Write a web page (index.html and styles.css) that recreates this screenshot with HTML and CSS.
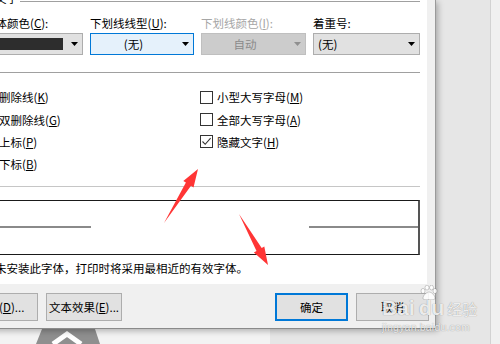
FILE: index.html
```html
<!DOCTYPE html>
<html lang="zh-CN">
<head>
<meta charset="utf-8">
<title>字体</title>
<link rel="stylesheet" href="styles.css">
</head>
<body>
<div class="stage">
  <div class="dialog">
    <div class="panel">
      <div class="group-head"><span class="group-title">所有文字</span><span class="group-line"></span></div>
      <div class="font-grid">
        <span class="fld-label">字体颜色(<u>C</u>):</span>
        <span class="fld-label">下划线线型(<u>U</u>):</span>
        <span class="fld-label is-disabled">下划线颜色(<u>I</u>):</span>
        <span class="fld-label">着重号:</span>
        <div class="combo"><span class="swatch"></span><svg class="arrow" width="7" height="4" viewBox="0 0 7 4"><path d="M0 0h7L3.5 4z"/></svg></div>
        <div class="combo combo-hover"><span class="combo-text centered">(无)</span><svg class="arrow" width="7" height="4" viewBox="0 0 7 4"><path d="M0 0h7L3.5 4z"/></svg></div>
        <div class="combo combo-disabled"><span class="combo-text centered">自动</span><svg class="arrow" width="7" height="4" viewBox="0 0 7 4"><path d="M0 0h7L3.5 4z"/></svg></div>
        <div class="combo"><span class="combo-text">(无)</span><svg class="arrow" width="7" height="4" viewBox="0 0 7 4"><path d="M0 0h7L3.5 4z"/></svg></div>
      </div>
      <div class="sep sep-effects"></div>
      <div class="effects">
        <div class="effects-col">
          <div class="check"><span class="box"></span><span>删除线(<u>K</u>)</span></div>
          <div class="check"><span class="box"></span><span>双删除线(<u>G</u>)</span></div>
          <div class="check"><span class="box"></span><span>上标(<u>P</u>)</span></div>
          <div class="check"><span class="box"></span><span>下标(<u>B</u>)</span></div>
        </div>
        <div class="effects-col">
          <div class="check"><span class="box"></span><span>小型大写字母(<u>M</u>)</span></div>
          <div class="check"><span class="box"></span><span>全部大写字母(<u>A</u>)</span></div>
          <div class="check"><span class="box"><svg width="11" height="11" viewBox="0 0 11 11"><path d="M1.5 5.5L4.2 8.3L9.6 2.2" fill="none" stroke="#333" stroke-width="1.1"/></svg></span><span>隐藏文字(<u>H</u>)</span></div>
        </div>
      </div>
      <div class="sep sep-preview"></div>
      <div class="preview"><span class="pv-line pv-left"></span><span class="pv-line pv-right"></span></div>
      <p class="note">未安装此字体，打印时将采用最相近的有效字体。</p>
    </div>
    <div class="buttons">
      <button class="btn btn-wide">设为默认值(<u>D</u>)...</button>
      <button class="btn btn-effects">文本效果(<u>E</u>)...</button>
      <span class="spacer"></span>
      <button class="btn btn-default">确定</button>
      <button class="btn">取消</button>
    </div>
  </div>
  <div class="backdrop-right"><span class="edge"></span></div>
  <div class="backdrop-bottom">
    <div class="bb-light">
      <svg width="270" height="15" viewBox="0 0 270 15"><polygon points="42,0 95,0 100,15 36,15" fill="#8f8f8f"/><polyline points="53,15 67,5 81,15" fill="none" stroke="#fff" stroke-width="5"/></svg>
    </div>
    <div class="bb-gray"></div>
  </div>
  <svg class="arrows" width="500" height="344" viewBox="0 0 500 344">
    <polygon points="164,223 185.9,182.6 183.3,181 198,169 193.5,187.4 191,185.8" fill="#ff3535"/>
    <polygon points="239,214 261.7,247.9 264.3,246.4 268,265 253.9,252.4 256.5,250.9" fill="#ff3535"/>
  </svg>
  <div class="watermark">
    <div class="wm-row">
      <span class="wm-bai">Bai</span>
      <span class="wm-du">du<svg class="paw" width="18" height="15" viewBox="0 0 18 15"><ellipse cx="3" cy="6" rx="2" ry="2.6"/><ellipse cx="7" cy="2.6" rx="2" ry="2.4"/><ellipse cx="11.5" cy="2.6" rx="2" ry="2.4"/><ellipse cx="15" cy="6" rx="2" ry="2.6"/><path d="M9 7c-3 0-6 4-6 6s2 1.8 6 1.8 6 .2 6-1.8-3-6-6-6z"/></svg></span>
      <span class="wm-jy">经验</span>
    </div>
    <div class="wm-url">jingyan.baidu.com</div>
  </div>
</div>
</body>
</html>
```
FILE: styles.css
```css
* { box-sizing: border-box; }
html, body { margin: 0; padding: 0; }
body {
  width: 500px;
  height: 344px;
  overflow: hidden;
  background: #e6e6e6;
  color: #000;
  font-family: "Noto Sans CJK SC", "Noto Sans", sans-serif;
  font-size: 11.5px;
}
u { text-decoration: underline; text-underline-offset: 1px; }

.stage {
  position: relative;
  width: 500px;
  height: 344px;
  overflow: hidden;
  display: grid;
  grid-template-columns: 436px 64px;
  grid-template-rows: 329px 15px;
}

.dialog {
  grid-column: 1;
  grid-row: 1;
  width: 516px;
  margin-left: -80px;
  position: relative;
  z-index: 1;
  display: flex;
  flex-direction: column;
  background: #f0f0f0;
  border-right: 1px solid #9a9a9a;
  border-bottom: 1px solid #8a8a8a;
  box-shadow: 2px 2px 6px rgba(0, 0, 0, 0.28);
}

.panel {
  height: 284px;
  flex: none;
  margin-right: 8px;
  background: #fff;
  padding: 0 7px 0 64px;
  display: flex;
  flex-direction: column;
}

.group-head {
  display: flex;
  height: 14px;
  line-height: 14px;
  margin-top: -9px;
  margin-left: -12px;
  white-space: nowrap;
}
.group-line {
  flex: 1;
  height: 1px;
  margin-top: 10px;
  margin-left: 2px;
  background: #a0a0a0;
}

.font-grid {
  display: grid;
  grid-template-columns: 99px 104px 105px 107px;
  grid-template-rows: 16px 22px;
  column-gap: 7px;
  row-gap: 2px;
  margin-top: 10px;
}
.fld-label { line-height: 16px; white-space: nowrap; }
.fld-label.is-disabled { color: #a6a6a6; }

.combo {
  display: flex;
  align-items: center;
  height: 22px;
  padding: 0 4px 0 3px;
  background: #e1e1e1;
  border: 1px solid #adadad;
  white-space: nowrap;
}
.combo-hover { background: #e5f1fb; border-color: #0078d7; }
.combo-disabled { background: #cccccc; border-color: #bfbfbf; color: #8a8a8a; }
.combo-disabled .arrow { fill: #8f8f8f; }
.swatch { flex: 1; height: 12px; margin-right: 8px; background: #2d2d2d; }
.combo-text { flex: 1; line-height: 16px; padding-left: 1px; }
.combo-text.centered { text-align: center; padding-right: 10px; }
.arrow { flex: none; fill: #000; }

.sep { height: 1px; flex: none; }
.sep-effects { margin-top: 17px; background: #a0a0a0; }
.sep-preview { margin-top: 10px; background: #c6c6c6; }

.effects {
  display: grid;
  grid-template-columns: 218px 1fr;
  margin-top: 13px;
  margin-left: -2px;
}
.check {
  display: flex;
  align-items: center;
  gap: 4px;
  height: 22.4px;
  white-space: nowrap;
}
.box {
  flex: none;
  width: 13px;
  height: 13px;
  border: 1px solid #333;
  background: #fff;
  display: flex;
  align-items: center;
  justify-content: center;
}

.preview {
  flex: none;
  margin-top: 13px;
  height: 55px;
  border: 1px solid #1a1a1a;
  border-right: 2px solid #555;
  display: flex;
  align-items: center;
  justify-content: space-between;
}
.pv-line { height: 2px; background: #8a8a8a; }
.pv-left { width: 106px; }
.pv-right { width: 109px; }

.note {
  margin: 5px 0 0 11px;
  line-height: 16px;
  white-space: nowrap;
}

.buttons {
  flex: 1;
  display: flex;
  align-items: flex-start;
  gap: 8px;
  padding: 9px 6px 0 8px;
}
.spacer { flex: 1; }
.btn {
  height: 28px;
  width: 73px;
  padding: 0;
  font: inherit;
  color: #000;
  background: #e1e1e1;
  border: 1px solid #adadad;
  white-space: nowrap;
  text-align: center;
}
.btn-wide { width: 110px; }
.btn-effects { width: 76px; }
.btn-default { border: 2px solid #0078d7; }

.backdrop-right {
  grid-column: 2;
  grid-row: 1 / 3;
  background: #e6e6e6;
  display: flex;
  justify-content: flex-end;
}
.edge { width: 10px; background: #f0f0f0; border-left: 1px solid #d2d2d2; }

.backdrop-bottom { grid-column: 1; grid-row: 2; display: flex; }
.bb-light { width: 270px; background: #f3f3f3; }
.bb-light svg { display: block; }
.bb-gray { flex: 1; background: #e6e6e6; }

.arrows { position: absolute; left: 0; top: 0; z-index: 3; pointer-events: none; }

.watermark {
  position: absolute;
  left: 382px;
  top: 289px;
  z-index: 4;
  color: rgba(255, 255, 255, 0.85);
  text-shadow: 0 0 1px rgba(0, 0, 0, 0.45);
  font-family: "Liberation Sans", "Noto Sans CJK SC", sans-serif;
}
.wm-row { display: flex; align-items: flex-end; height: 30px; }
.wm-bai { font-size: 21px; font-weight: bold; line-height: 22px; }
.wm-du { position: relative; font-size: 21px; font-weight: bold; line-height: 22px; margin-left: 4px; }
.paw { position: absolute; left: 1px; top: -12px; fill: rgba(255,255,255,0.85); stroke: rgba(0,0,0,0.3); stroke-width: 0.6; }
.wm-jy { font-family: "Noto Sans CJK SC", sans-serif; font-size: 15px; line-height: 20px; margin-left: 3px; }
.wm-url { font-size: 10.5px; line-height: 12px; margin-top: 2px; letter-spacing: 0.2px; }
```
